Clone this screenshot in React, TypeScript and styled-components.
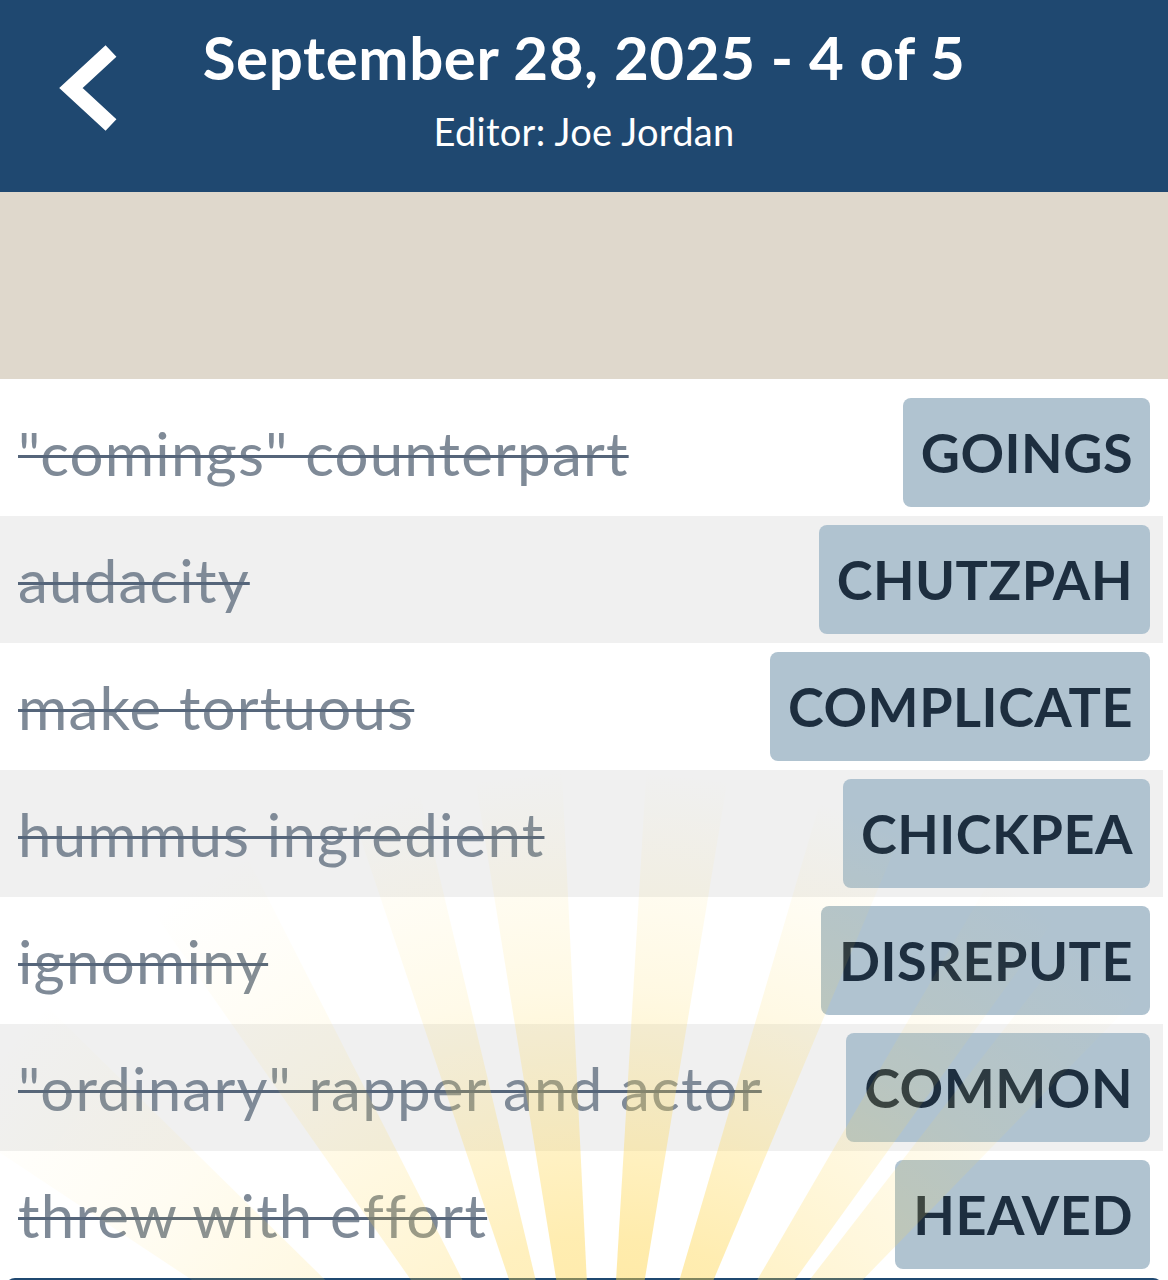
import styled, { createGlobalStyle } from 'styled-components'

const GlobalStyle = createGlobalStyle`
    html, body {
        margin: 0;
        padding: 0;
        background: #ffffff;
    }
    body {
        font-family: Lato, "Open Sans", sans-serif;
    }
`

const StyledPage = styled.div`
    position: relative;
    width: 1168px;
    height: 1280px;
    overflow: hidden;
    background: #ffffff;
`

const Header = styled.header`
    height: 192px;
    background: #1f4870;
    color: #fff;
    display: grid;
    grid-template-columns: 1fr auto 1fr;
    align-items: start;

    .back {
        display: flex;
        padding: 42px 0 0 56px;
        background: transparent;
        border: none;
        cursor: pointer;
        justify-self: start;
    }

    .titles {
        display: flex;
        flex-direction: column;
        align-items: center;
        padding-top: 20px;
    }

    .title {
        font-size: 60px;
        font-weight: 700;
        line-height: 74px;
        letter-spacing: 0.6px;
    }

    .subtitle {
        font-size: 38px;
        font-weight: 400;
        line-height: 46px;
        margin-top: 14px;
        letter-spacing: 0.3px;
    }
`

const Banner = styled.div`
    height: 187px;
    background: #dfd8cc;
`

const List = styled.div`
    padding-top: 10px;
`

const Row = styled.div<{ $shade: boolean }>`
    height: 127px;
    margin-right: 5px;
    padding: 0 13px 0 18px;
    display: flex;
    align-items: center;
    justify-content: space-between;
    background: ${({ $shade }) => ($shade ? '#f0f0f0' : '#ffffff')};

    .clue {
        font-size: 60px;
        letter-spacing: 1.2px;
        color: #7f8a97;
        text-decoration: line-through;
        text-decoration-color: #55657a;
        text-decoration-thickness: 3px;
        white-space: nowrap;
    }
`

const Answer = styled.div`
    height: 109px;
    padding: 0 17px 0 18px;
    display: flex;
    align-items: center;
    background: #b0c3d0;
    border-radius: 8px;
    color: #1d2e3f;
    font-size: 54px;
    font-weight: 700;
    letter-spacing: 0.5px;
`

const Footer = styled.div`
    height: 60px;
    margin: 0 5px;
    background: #1f4870;
    border-radius: 10px 10px 0 0;
`

const Rays = styled.svg`
    position: absolute;
    left: 0;
    top: 0;
    pointer-events: none;
`

const clues = [
    { clue: '"comings" counterpart', answer: 'GOINGS' },
    { clue: 'audacity', answer: 'CHUTZPAH' },
    { clue: 'make tortuous', answer: 'COMPLICATE' },
    { clue: 'hummus ingredient', answer: 'CHICKPEA' },
    { clue: 'ignominy', answer: 'DISREPUTE' },
    { clue: '"ordinary" rapper and actor', answer: 'COMMON' },
    { clue: 'threw with effort', answer: 'HEAVED' },
]

// angle from vertical (deg), half width (deg), strength
const rays = [
    [-51, 5.5, 0.4],
    [-31, 4, 0.5],
    [-16, 2.6, 0.7],
    [-6, 3.2, 0.85],
    [6.4, 3, 0.9],
    [19.6, 3.2, 0.85],
    [33, 2.8, 0.6],
    [41, 3.2, 0.5],
]

const ox = 600
const oy = 1550
const reach = 780

const rayPath = (angle: number, half: number) => {
    const a = ((angle - half) * Math.PI) / 180
    const b = ((angle + half) * Math.PI) / 180
    const p1 = [ox + reach * Math.sin(a), oy - reach * Math.cos(a)]
    const p2 = [ox + reach * Math.sin(b), oy - reach * Math.cos(b)]
    return `M${ox} ${oy} L${p1[0].toFixed(1)} ${p1[1].toFixed(1)} L${p2[0].toFixed(1)} ${p2[1].toFixed(1)} Z`
}

export default function App() {
    return (
        <StyledPage>
            <GlobalStyle />
            <Header>
                <button className="back" aria-label="Back">
                    <svg width="64" height="92" viewBox="0 0 64 92">
                        <polyline
                            points="55,9 15,46 55,83"
                            fill="none"
                            stroke="#ffffff"
                            strokeWidth="16"
                            strokeLinejoin="miter"
                        />
                    </svg>
                </button>
                <div className="titles">
                    <div className="title">September 28, 2025 - 4 of 5</div>
                    <div className="subtitle">Editor: Joe Jordan</div>
                </div>
                <div />
            </Header>
            <Banner />
            <List>
                {clues.map((c, i) => (
                    <Row key={c.answer} $shade={i % 2 === 1}>
                        <span className="clue">{c.clue}</span>
                        <Answer>{c.answer}</Answer>
                    </Row>
                ))}
            </List>
            <Footer />
            <Rays width="1168" height="1280" viewBox="0 0 1168 1280">
                <defs>
                    <radialGradient id="glow" cx={ox} cy={oy} r={reach} gradientUnits="userSpaceOnUse">
                        <stop offset="0" stopColor="#ffd040" stopOpacity="0.65" />
                        <stop offset="0.4" stopColor="#ffd447" stopOpacity="0.5" />
                        <stop offset="0.72" stopColor="#ffd84f" stopOpacity="0.18" />
                        <stop offset="1" stopColor="#ffdc5a" stopOpacity="0" />
                    </radialGradient>
                </defs>
                {rays.map(([angle, half, strength]) => (
                    <path key={angle} d={rayPath(angle, half)} fill="url(#glow)" opacity={strength} />
                ))}
            </Rays>
        </StyledPage>
    )
}
